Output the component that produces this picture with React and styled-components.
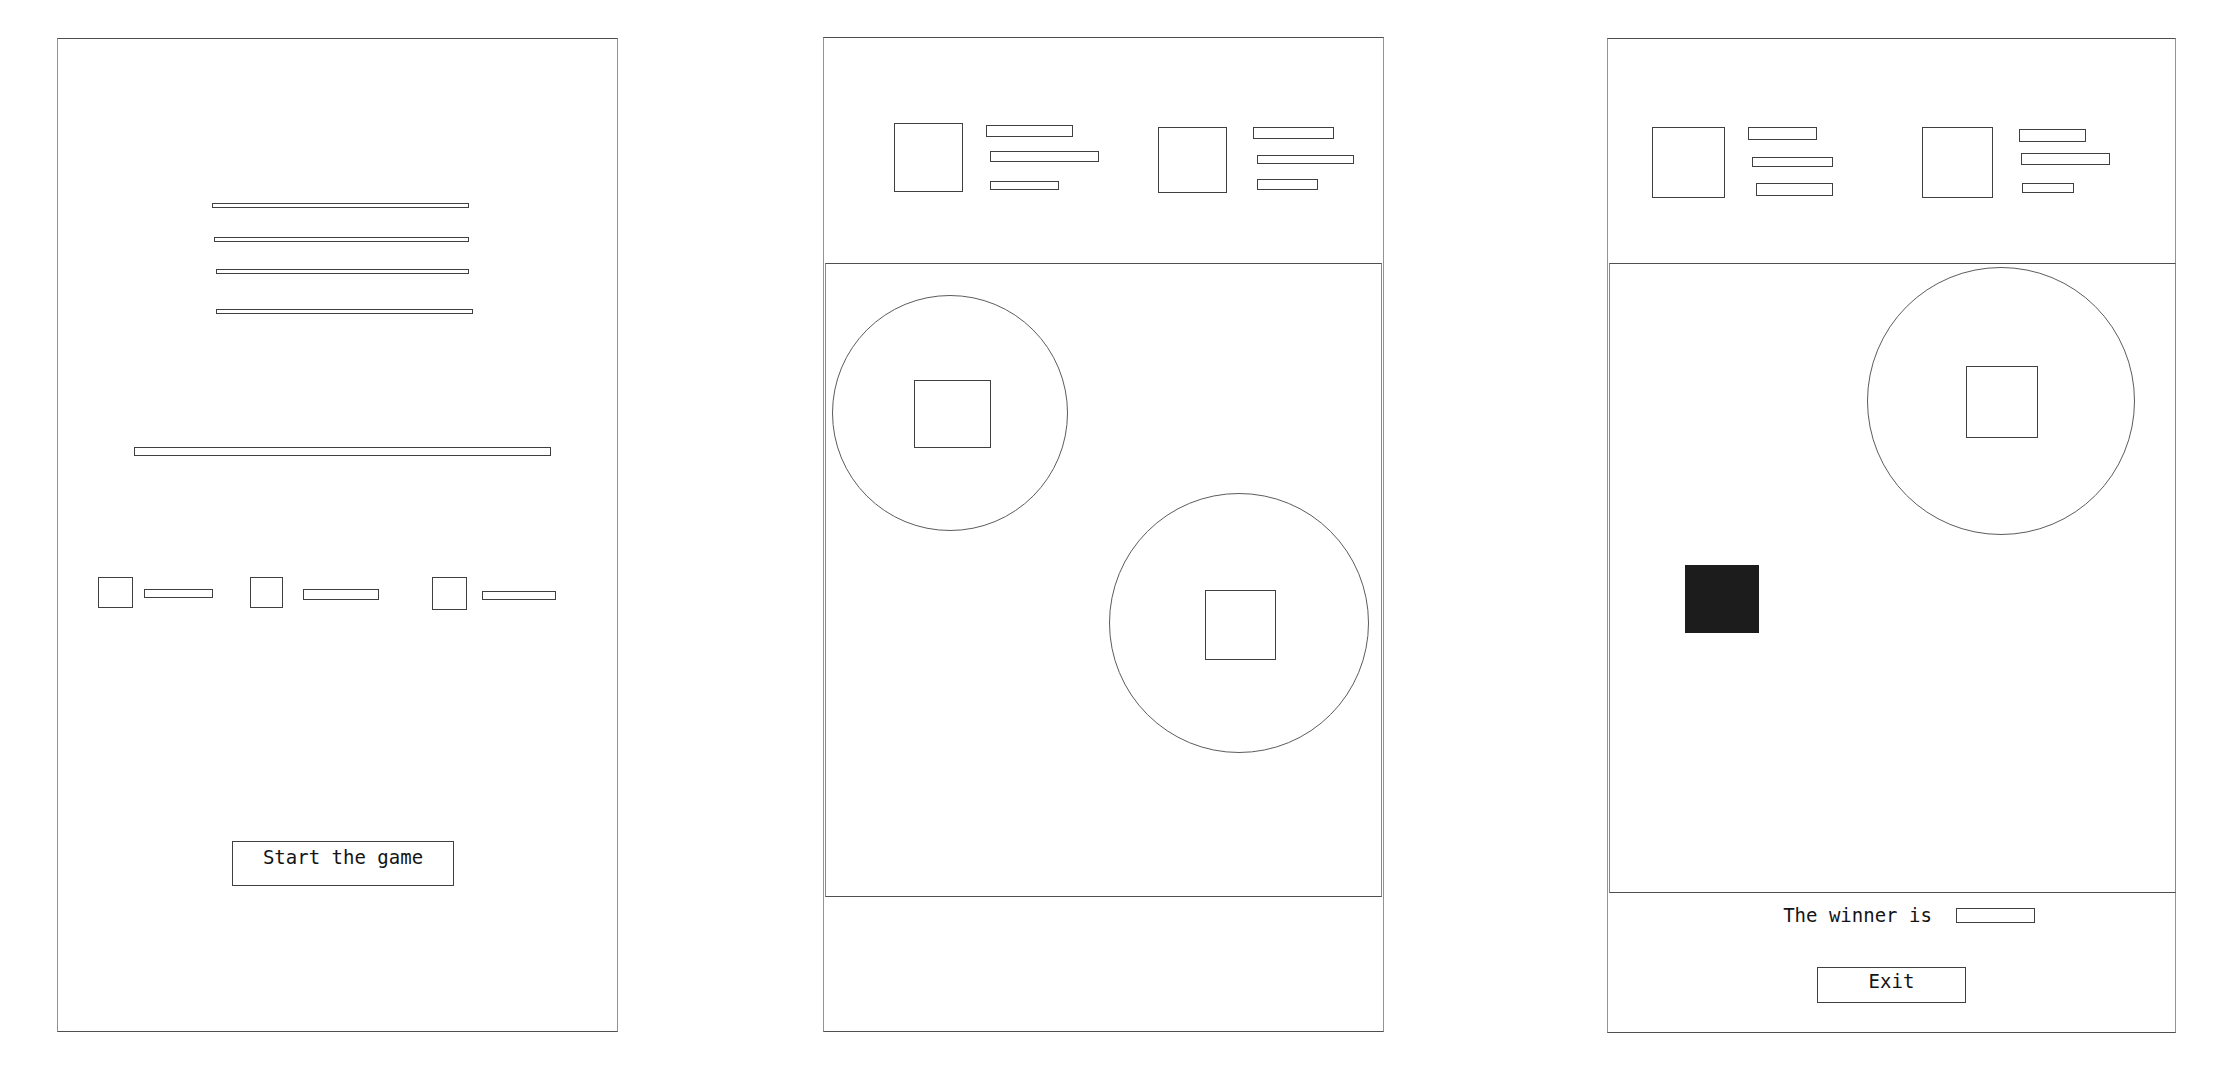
import React from "react";
import styled, { createGlobalStyle } from "styled-components";

const lobbyLines = [
	{ width: 257, left: 154, top: 164 },
	{ width: 255, left: 156, top: 29 },
	{ width: 253, left: 158, top: 27 },
	{ width: 257, left: 158, top: 35 },
];

const modes = [
	{ left: 0, box: [35, 31], gap: 11, bar: [69, 9], dy: 12 },
	{ left: 37, box: [33, 31], gap: 20, bar: [76, 11], dy: 12 },
	{ left: 53, box: [35, 33], gap: 15, bar: [74, 9], dy: 14 },
];

const matchPlayers = [
	{
		left: 70,
		top: 85,
		avatar: [69, 69],
		gap: 23,
		bars: [
			{ w: 87, h: 12, dx: 0, mt: 2 },
			{ w: 109, h: 11, dx: 4, mt: 14 },
			{ w: 69, h: 9, dx: 4, mt: 19 },
		],
	},
	{
		left: 59,
		top: 89,
		avatar: [69, 66],
		gap: 26,
		bars: [
			{ w: 81, h: 12, dx: 0, mt: 0 },
			{ w: 97, h: 9, dx: 4, mt: 16 },
			{ w: 61, h: 11, dx: 4, mt: 15 },
		],
	},
];

const resultPlayers = [
	{
		left: 44,
		top: 88,
		avatar: [73, 71],
		gap: 23,
		bars: [
			{ w: 69, h: 13, dx: 0, mt: 0 },
			{ w: 81, h: 10, dx: 4, mt: 17 },
			{ w: 77, h: 13, dx: 8, mt: 16 },
		],
	},
	{
		left: 89,
		top: 88,
		avatar: [71, 71],
		gap: 26,
		bars: [
			{ w: 67, h: 13, dx: 0, mt: 2 },
			{ w: 89, h: 12, dx: 2, mt: 11 },
			{ w: 52, h: 10, dx: 3, mt: 18 },
		],
	},
];

function PlayerCard({ player }) {
	return (
		<Card $left={player.left} $top={player.top}>
			<Avatar $w={player.avatar[0]} $h={player.avatar[1]} />
			<BarStack $gap={player.gap}>
				{player.bars.map((bar, i) => (
					<Placeholder
						key={i}
						$w={bar.w}
						$h={bar.h}
						$left={bar.dx}
						$top={bar.mt}
					/>
				))}
			</BarStack>
		</Card>
	);
}

function Lobby() {
	return (
		<Panel $width={561} $height={994} $mt={1} $ml={0}>
			{lobbyLines.map((line, i) => (
				<Placeholder
					key={i}
					$w={line.width}
					$h={5}
					$left={line.left}
					$top={line.top}
				/>
			))}
			<Placeholder $w={417} $h={9} $left={76} $top={133} />
			<ModeRow>
				{modes.map((mode, i) => (
					<ModeOption key={i} $left={mode.left}>
						<Avatar $w={mode.box[0]} $h={mode.box[1]} />
						<Placeholder
							$w={mode.bar[0]}
							$h={mode.bar[1]}
							$left={mode.gap}
							$top={mode.dy}
						/>
					</ModeOption>
				))}
			</ModeRow>
			<StartButton>Start the game</StartButton>
		</Panel>
	);
}

function Match() {
	return (
		<Panel $width={561} $height={995} $mt={0} $ml={205}>
			<Header $height={225}>
				{matchPlayers.map((p, i) => (
					<PlayerCard key={i} player={p} />
				))}
			</Header>
			<Board $width={557} $height={634}>
				<Token $x={6} $y={31} $size={236}>
					<Avatar $w={77} $h={68} $dx={4} $dy={1} />
				</Token>
				<Token $x={283} $y={229} $size={260}>
					<Avatar $w={71} $h={70} $dx={2} $dy={4} />
				</Token>
			</Board>
		</Panel>
	);
}

function Result() {
	return (
		<Panel $width={569} $height={995} $mt={1} $ml={223}>
			<Header $height={224}>
				{resultPlayers.map((p, i) => (
					<PlayerCard key={i} player={p} />
				))}
			</Header>
			<Board $width={567} $height={630}>
				<Token $x={257} $y={3} $size={268}>
					<Avatar $w={72} $h={72} $dx={2} $dy={2} />
				</Token>
				<Piece />
			</Board>
			<WinnerRow>
				<Label>The winner is</Label>
				<Placeholder $w={79} $h={15} $left={24} $top={0} />
			</WinnerRow>
			<ExitButton>Exit</ExitButton>
		</Panel>
	);
}

export default function App() {
	return (
		<>
			<GlobalStyle />
			<Page>
				<Lobby />
				<Match />
				<Result />
			</Page>
		</>
	);
}

const GlobalStyle = createGlobalStyle`
	* {
		box-sizing: border-box;
	}
	body {
		margin: 0;
		background: #ffffff;
		font-family: "DejaVu Sans Mono", "Liberation Mono", monospace;
		color: #141414;
	}
`;

const Page = styled.div`
	width: 2230px;
	height: 1078px;
	padding: 37px 0 0 57px;
	display: flex;
	align-items: flex-start;
	background: #ffffff;
`;

const Panel = styled.div`
	width: ${(p) => p.$width}px;
	height: ${(p) => p.$height}px;
	margin-top: ${(p) => p.$mt}px;
	margin-left: ${(p) => p.$ml}px;
	flex-shrink: 0;
	display: flex;
	flex-direction: column;
	align-items: flex-start;
	border: 1px solid #4f4f4f;
	border-left-color: #939393;
	border-right-color: #939393;
`;

const Placeholder = styled.div`
	width: ${(p) => p.$w}px;
	height: ${(p) => p.$h}px;
	margin-left: ${(p) => p.$left}px;
	margin-top: ${(p) => p.$top}px;
	flex-shrink: 0;
	border: 1px solid #404040;
`;

const Avatar = styled.div`
	width: ${(p) => p.$w}px;
	height: ${(p) => p.$h}px;
	margin-left: ${(p) => p.$dx || 0}px;
	margin-top: ${(p) => p.$dy || 0}px;
	flex-shrink: 0;
	border: 1px solid #404040;
`;

const ModeRow = styled.div`
	display: flex;
	align-items: flex-start;
	margin: 121px 0 0 40px;
`;

const ModeOption = styled.div`
	display: flex;
	align-items: flex-start;
	margin-left: ${(p) => p.$left}px;
`;

const StartButton = styled.div`
	width: 222px;
	height: 45px;
	margin: 231px 0 0 174px;
	padding-top: 4px;
	border: 1px solid #404040;
	font-size: 19px;
	line-height: 22px;
	text-align: center;
`;

const Header = styled.div`
	width: 100%;
	height: ${(p) => p.$height}px;
	flex-shrink: 0;
	display: flex;
	align-items: flex-start;
`;

const Card = styled.div`
	display: flex;
	align-items: flex-start;
	margin-left: ${(p) => p.$left}px;
	margin-top: ${(p) => p.$top}px;
`;

const BarStack = styled.div`
	display: flex;
	flex-direction: column;
	align-items: flex-start;
	margin-left: ${(p) => p.$gap}px;
`;

const Board = styled.div`
	position: relative;
	width: ${(p) => p.$width}px;
	height: ${(p) => p.$height}px;
	margin-left: 1px;
	flex-shrink: 0;
	border: 1px solid #4f4f4f;
	border-left-color: #888888;
	border-right-color: #888888;
`;

const Token = styled.div`
	position: absolute;
	left: ${(p) => p.$x}px;
	top: ${(p) => p.$y}px;
	width: ${(p) => p.$size}px;
	height: ${(p) => p.$size}px;
	border-radius: 50%;
	border: 1px solid #5c5c5c;
	display: flex;
	align-items: center;
	justify-content: center;
`;

const Piece = styled.div`
	position: absolute;
	left: 75px;
	top: 301px;
	width: 74px;
	height: 68px;
	background: #1c1c1c;
`;

const WinnerRow = styled.div`
	width: 100%;
	height: 22px;
	margin-top: 11px;
	padding-left: 35px;
	display: flex;
	align-items: center;
	justify-content: center;
`;

const Label = styled.span`
	font-size: 19px;
	line-height: 22px;
	white-space: nowrap;
`;

const ExitButton = styled.div`
	width: 149px;
	height: 36px;
	margin: 41px auto 0;
	padding-top: 2px;
	border: 1px solid #404040;
	font-size: 19px;
	line-height: 22px;
	text-align: center;
`;
